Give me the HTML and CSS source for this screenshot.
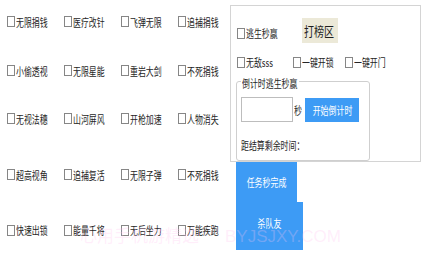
FILE: index.html
```html
<!DOCTYPE html>
<html lang="zh-CN">
<head>
<meta charset="utf-8">
<title>辅助</title>
<link rel="stylesheet" href="styles.css">
</head>
<body>
<div class="app">
  <div class="cheats">
    <label class="chk"><span class="box"></span><span class="t">无限捐钱</span></label>
    <label class="chk"><span class="box"></span><span class="t">医疗改针</span></label>
    <label class="chk"><span class="box"></span><span class="t">飞弹无限</span></label>
    <label class="chk"><span class="box"></span><span class="t">追捕捐钱</span></label>

    <label class="chk"><span class="box"></span><span class="t">小偷透视</span></label>
    <label class="chk"><span class="box"></span><span class="t">无限星能</span></label>
    <label class="chk"><span class="box"></span><span class="t">重岩大剑</span></label>
    <label class="chk"><span class="box"></span><span class="t">不死捐钱</span></label>

    <label class="chk"><span class="box"></span><span class="t">无视法穗</span></label>
    <label class="chk"><span class="box"></span><span class="t">山河屏风</span></label>
    <label class="chk"><span class="box"></span><span class="t">开枪加速</span></label>
    <label class="chk"><span class="box"></span><span class="t">人物消失</span></label>

    <label class="chk"><span class="box"></span><span class="t">超高视角</span></label>
    <label class="chk"><span class="box"></span><span class="t">追捕复活</span></label>
    <label class="chk"><span class="box"></span><span class="t">无限子弹</span></label>
    <label class="chk"><span class="box"></span><span class="t">不死捐钱</span></label>

    <label class="chk"><span class="box"></span><span class="t">快速出锁</span></label>
    <label class="chk"><span class="box"></span><span class="t">能量千将</span></label>
    <label class="chk"><span class="box"></span><span class="t">无后坐力</span></label>
    <label class="chk"><span class="box"></span><span class="t">万能疾跑</span></label>
  </div>

  <div class="side">
    <div class="panel">
      <div class="row-a">
        <label class="chk chk-win"><span class="box"></span><span class="t">逃生秒赢</span></label>
        <div class="rank"><span class="t t-big">打榜区</span></div>
      </div>
      <div class="row-b">
        <label class="chk w56"><span class="box"></span><span class="t">无敌sss</span></label>
        <label class="chk w52"><span class="box"></span><span class="t">一键开锁</span></label>
        <label class="chk"><span class="box"></span><span class="t">一键开门</span></label>
      </div>
      <fieldset class="group">
        <legend class="legend"><span class="t">倒计时逃生秒赢</span></legend>
        <div class="timer">
          <input class="secs" type="text">
          <span class="sec"><span class="t">秒</span></span>
          <div class="start"><span class="t tc">开始倒计时</span></div>
        </div>
        <div class="remain"><span class="t">距结算剩余时间：</span></div>
      </fieldset>
    </div>
    <div class="btn b1"><span class="t tc">任务秒完成</span></div>
    <div class="btn b2"><span class="t tc">杀队友</span></div>
  </div>
</div>
<div class="wm">心用手机游精选<span class="wm-url">BYJSJXY.COM</span></div>
</body>
</html>
```

FILE: styles.css
```css
html, body {
  margin: 0;
  padding: 0;
}

body {
  width: 422px;
  height: 255px;
  overflow: hidden;
  position: relative;
  background: #ffffff;
  color: #1e1e1e;
  font-family: "Noto Sans CJK SC", "Noto Sans", sans-serif;
}

.app {
  display: flex;
}

/* left checkbox grid */
.cheats {
  width: 230px;
  box-sizing: border-box;
  padding: 15.5px 0 0 7px;
  display: grid;
  grid-template-columns: 57px 57px 57px auto;
  grid-template-rows: 49px 48px 56px 55.5px 12px;
  align-items: start;
}

.chk {
  display: flex;
  align-items: center;
  height: 12px;
  white-space: nowrap;
}

.box {
  flex: none;
  width: 8px;
  height: 11px;
  box-sizing: border-box;
  border: 1px solid #868686;
  background: #ffffff;
  margin-right: 1px;
}

.t {
  display: inline-block;
  font-size: 11px;
  line-height: 12px;
  white-space: nowrap;
  transform: scaleX(0.72);
  transform-origin: 0 50%;
}

.tc {
  transform-origin: 50% 50%;
}

.t-big {
  font-size: 13px;
  line-height: 14px;
  transform: scaleX(0.77);
}

/* right side */
.side {
  width: 192px;
  padding-top: 5px;
  display: flex;
  flex-direction: column;
  align-items: flex-start;
}

.panel {
  width: 191px;
  height: 157px;
  box-sizing: border-box;
  border: 1px solid #d4d4d4;
  padding: 0 0 0 5px;
  display: flex;
  flex-direction: column;
}

.row-a {
  display: flex;
  align-items: flex-start;
  height: 25px;
  margin: 12px 0 0 1px;
}

.chk-win {
  width: 65px;
  margin-top: 9px;
}

.rank {
  width: 36px;
  height: 25px;
  box-sizing: border-box;
  padding-left: 2px;
  background: #ece9d8;
  display: flex;
  align-items: center;
}

.row-b {
  display: flex;
  margin: 13px 0 0 1px;
}

.w56 { width: 56px; }
.w52 { width: 52px; }

.group {
  flex: 1;
  width: 134px;
  min-width: 0;
  box-sizing: border-box;
  margin: 7px 0 0 0;
  padding: 0 0 0 4px;
  border: 1px solid #cfcfcf;
  border-radius: 3px;
}

.legend {
  width: 56px;
  padding: 0 1px;
  height: 12px;
  line-height: 12px;
}

.timer {
  display: flex;
  align-items: center;
  margin-top: 10px;
}

.secs {
  width: 52px;
  height: 25px;
  box-sizing: border-box;
  margin: 0;
  padding: 0;
  border: 1px solid #bdbdbd;
  background: #ffffff;
  outline: none;
}

.sec {
  width: 11px;
  margin-left: 1px;
  display: flex;
  align-items: center;
}

.start {
  width: 54px;
  height: 24px;
  background: #3d9bf5;
  color: #ffffff;
  display: flex;
  align-items: center;
  justify-content: center;
}

.remain {
  margin-top: 9px;
  height: 12px;
}

.btn {
  margin-left: 6px;
  background: #3d9bf5;
  color: #ffffff;
  display: flex;
  align-items: center;
  justify-content: center;
  box-sizing: border-box;
}

.b1 {
  width: 61px;
  height: 40px;
}

.b2 {
  width: 67px;
  height: 48px;
  padding-bottom: 6px;
}

/* watermark overlay */
.wm {
  position: absolute;
  left: 80px;
  top: 224px;
  font-size: 17px;
  line-height: 22px;
  white-space: nowrap;
  color: rgba(255, 195, 240, 0.28);
  pointer-events: none;
}

.wm-url {
  margin-left: 26px;
  font-family: "Liberation Sans", sans-serif;
}
```
